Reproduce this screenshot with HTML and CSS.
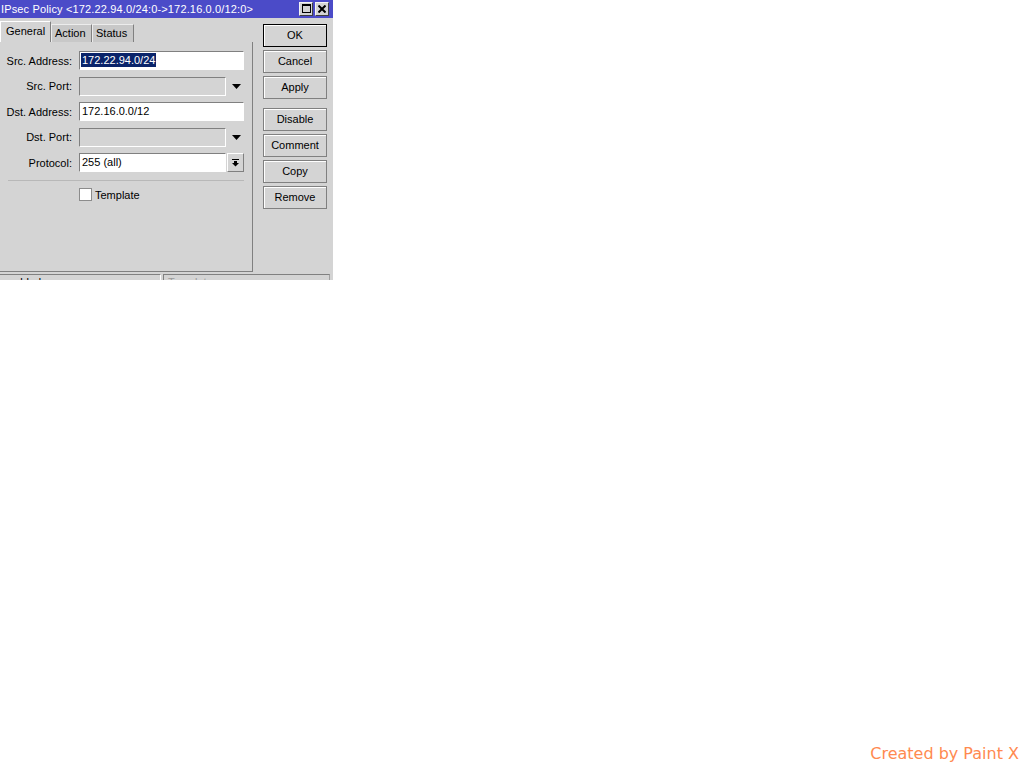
FILE: index.html
```html
<!DOCTYPE html>
<html>
<head>
<meta charset="utf-8">
<link rel="stylesheet" href="styles.css">
</head>
<body>
<div class="window">
  <div class="titlebar">
    <span class="title">IPsec Policy &lt;172.22.94.0/24:0-&gt;172.16.0.0/12:0&gt;</span>
    <div class="tb-buttons">
      <span class="tb-btn"><svg width="9" height="9" viewBox="0 0 9 9"><rect x="0.5" y="0.5" width="8" height="8" fill="none" stroke="#000"/><rect x="0" y="0" width="9" height="2" fill="#000"/></svg></span>
      <span class="tb-btn"><svg width="8" height="8" viewBox="0 0 8 8"><path d="M0.5 0.5 L7.5 7.5 M7.5 0.5 L0.5 7.5" stroke="#000" stroke-width="2"/></svg></span>
    </div>
  </div>
  <div class="main">
    <div class="left">
      <div class="tabs">
        <div class="tab active">General</div>
        <div class="tab t-action">Action</div>
        <div class="tab t-status">Status</div>
      </div>
      <div class="panel">
        <div class="form">
          <div class="row">
            <span class="label">Src. Address:</span>
            <div class="input"><span class="sel">172.22.94.0/24</span></div>
          </div>
          <div class="row">
            <span class="label">Src. Port:</span>
            <div class="input short disabled"></div>
            <span class="dd"><svg width="9" height="5" viewBox="0 0 9 5"><polygon points="0,0 9,0 4.5,5" fill="#000"/></svg></span>
          </div>
          <div class="row">
            <span class="label">Dst. Address:</span>
            <div class="input">172.16.0.0/12</div>
          </div>
          <div class="row">
            <span class="label">Dst. Port:</span>
            <div class="input short disabled"></div>
            <span class="dd"><svg width="9" height="5" viewBox="0 0 9 5"><polygon points="0,0 9,0 4.5,5" fill="#000"/></svg></span>
          </div>
          <div class="row">
            <span class="label">Protocol:</span>
            <div class="input short">255 (all)</div>
            <span class="pbtn"><svg width="7" height="8" viewBox="0 0 7 8"><rect x="0" y="0" width="7" height="1" fill="#000"/><rect x="2" y="2" width="3" height="2" fill="#000"/><polygon points="0,4 7,4 3.5,7.5" fill="#000"/></svg></span>
          </div>
        </div>
        <div class="sep"></div>
        <div class="check-row">
          <span class="checkbox"></span>
          <span>Template</span>
        </div>
      </div>
    </div>
    <div class="buttons">
      <div class="btn default">OK</div>
      <div class="btn">Cancel</div>
      <div class="btn">Apply</div>
      <div class="btn group">Disable</div>
      <div class="btn">Comment</div>
      <div class="btn">Copy</div>
      <div class="btn">Remove</div>
    </div>
  </div>
  <div class="statusbar">
    <div class="sb sb1">enabled</div>
    <div class="sb sb2">Template</div>
  </div>
</div>
<div class="watermark">Created by Paint X</div>
</body>
</html>
```
FILE: styles.css
```css
* { box-sizing: border-box; }
body {
  margin: 0;
  background: #fff;
  font-family: "Liberation Sans", Arial, sans-serif;
  font-size: 11px;
  color: #000;
}
.window {
  width: 333px;
  height: 280px;
  overflow: hidden;
  background: #d4d4d4;
  display: flex;
  flex-direction: column;
}
.titlebar {
  height: 18px;
  flex: none;
  background: #4b4bc8;
  color: #fff;
  display: flex;
  align-items: center;
  padding-left: 1px;
  padding-right: 4px;
}
.title {
  flex: 1;
  white-space: nowrap;
  line-height: 18px;
  letter-spacing: 0.15px;
}
.tb-buttons {
  display: flex;
  gap: 2px;
  margin-top: -1px;
}
.tb-btn {
  width: 14px;
  height: 14px;
  background: #d4d4d4;
  border: 1px solid;
  border-color: #f4f4f4 #404040 #404040 #f4f4f4;
  display: flex;
  align-items: center;
  justify-content: center;
}
.main {
  display: flex;
  height: 254px;
  flex: none;
}
.left {
  width: 253px;
  display: flex;
  flex-direction: column;
}
.tabs {
  height: 24px;
  display: flex;
  align-items: flex-end;
}
.tab {
  height: 18px;
  background: #c8c8c8;
  border-left: 1px solid #ececec;
  border-top: 1px solid #ececec;
  border-right: 1px solid #808080;
  padding-left: 3px;
  line-height: 17px;
}
.tab.active {
  height: 21px;
  width: 51px;
  background: #d4d4d4;
  border-left-color: #fff;
  border-top-color: #fff;
  padding-left: 5px;
  line-height: 19px;
}
.t-action { width: 41px; }
.t-status { width: 42px; }
.panel {
  height: 230px;
  border-right: 1px solid #808080;
  border-bottom: 1px solid #808080;
  padding-top: 9px;
}
.form {
  display: flex;
  flex-direction: column;
  gap: 6.5px;
}
.row {
  display: flex;
  align-items: center;
  height: 19px;
}
.label {
  width: 72px;
  margin-right: 7px;
  text-align: right;
  white-space: nowrap;
}
.input {
  width: 165px;
  height: 19px;
  border: 1px solid;
  border-color: #808080 #fff #fff #808080;
  background: #fff;
  padding-left: 2px;
  line-height: 17px;
  white-space: nowrap;
}
.input.short { width: 147px; }
.input.disabled { background: #d4d4d4; }
.sel {
  display: inline-block;
  background: #0a246a;
  color: #fff;
  line-height: 14px;
  padding: 0 1px;
  margin-left: -1px;
}
.dd {
  width: 20px;
  display: flex;
  justify-content: center;
  align-items: center;
}
.pbtn {
  margin-left: 1px;
  width: 17px;
  height: 19px;
  border: 1px solid;
  border-color: #fff #808080 #808080 #fff;
  display: flex;
  align-items: center;
  justify-content: center;
}
.sep {
  margin: 8px 0 0 8px;
  width: 236px;
  height: 1px;
  background: #b8b8b8;
}
.check-row {
  display: flex;
  align-items: center;
  gap: 3px;
  margin-top: 7px;
  padding-left: 79px;
  height: 13px;
}
.checkbox {
  width: 13px;
  height: 13px;
  background: #fff;
  border: 1px solid #8c8c8c;
}
.buttons {
  width: 64px;
  margin-left: 10px;
  padding-top: 6px;
  display: flex;
  flex-direction: column;
  gap: 3px;
}
.btn {
  height: 23px;
  border: 1px solid #808080;
  box-shadow: inset 1px 1px 0 #fff;
  text-align: center;
  line-height: 21px;
}
.btn.default { border-color: #000; }
.btn.group { margin-top: 6px; }
.statusbar {
  margin-top: 2px;
  display: flex;
  gap: 2px;
  height: 20px;
}
.sb {
  border-top: 1px solid #808080;
  line-height: 15px;
  white-space: nowrap;
}
.sb1 {
  width: 161px;
  padding-left: 2px;
  border-right: 1px solid #fff;
}
.sb2 {
  width: 167px;
  padding-left: 4px;
  border-left: 1px solid #808080;
  border-right: 1px solid #a0a0a0;
  color: #9a9a9a;
}
.watermark {
  position: absolute;
  right: 5px;
  bottom: 5px;
  font-family: "DejaVu Sans", sans-serif;
  font-size: 16px;
  color: #ff8a50;
}
```
